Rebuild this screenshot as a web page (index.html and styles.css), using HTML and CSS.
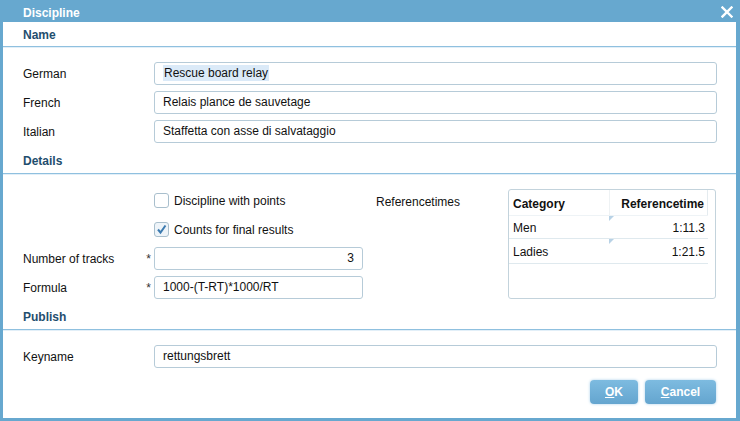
FILE: index.html
```html
<!DOCTYPE html>
<html>
<head>
<meta charset="utf-8">
<link rel="stylesheet" href="styles.css">
</head>
<body>
<div class="dialog">
  <div class="titlebar">
    <span class="title">Discipline</span>
    <svg class="close" width="12" height="12" viewBox="0 0 12 12"><path d="M1.5 1.5 L10.5 10.5 M10.5 1.5 L1.5 10.5" stroke="#fff" stroke-width="2.4" stroke-linecap="square"/></svg>
  </div>
  <div class="content">
    <div class="section-head first">Name</div>
    <div class="section-body">
      <div class="row"><label class="lbl">German</label><div class="input"><span class="sel">Rescue board relay</span></div></div>
      <div class="row"><label class="lbl">French</label><div class="input">Relais plance de sauvetage</div></div>
      <div class="row"><label class="lbl">Italian</label><div class="input">Staffetta con asse di salvataggio</div></div>
    </div>
    <div class="section-head">Details</div>
    <div class="section-body details">
      <div class="left">
        <div class="row"><label class="lbl"></label><div class="check"><span class="box"></span>Discipline with points</div></div>
        <div class="row"><label class="lbl"></label><div class="check"><span class="box on"><svg width="13" height="13" viewBox="0 0 13 13"><path d="M3 6.5 L5.5 9.5 L10.5 2.5" fill="none" stroke="#3d7bb0" stroke-width="2"/></svg></span>Counts for final results</div></div>
        <div class="row"><label class="lbl req">Number of tracks<span class="ast">*</span></label><div class="input small num">3</div></div>
        <div class="row"><label class="lbl req">Formula<span class="ast">*</span></label><div class="input small">1000-(T-RT)*1000/RT</div></div>
      </div>
      <div class="reflabel">Referencetimes</div>
      <div class="grid">
        <div class="ghead">
          <div class="c1">Category</div>
          <div class="c2">Referencetime</div>
        </div>
        <div class="grow"><div class="c1">Men</div><div class="c2 dirty">1:11.3</div></div>
        <div class="grow"><div class="c1">Ladies</div><div class="c2 dirty">1:21.5</div></div>
      </div>
    </div>
    <div class="section-head">Publish</div>
    <div class="section-body">
      <div class="row"><label class="lbl">Keyname</label><div class="input">rettungsbrett</div></div>
      <div class="buttons">
        <button class="btn ok"><u>O</u>K</button>
        <button class="btn cancel"><u>C</u>ancel</button>
      </div>
    </div>
  </div>
</div>
</body>
</html>
```

FILE: styles.css
```css
* { box-sizing: border-box; }
html, body { margin: 0; padding: 0; }
body {
  width: 740px;
  height: 421px;
  font-family: "Liberation Sans", Arial, sans-serif;
  font-size: 12px;
  color: #111;
  background: #fff;
}
.dialog {
  width: 740px;
  height: 421px;
  border-left: 3px solid #67a8cf;
  border-right: 4px solid #67a8cf;
  border-bottom: 3px solid #67a8cf;
  display: flex;
  flex-direction: column;
}
.titlebar {
  height: 22px;
  margin: 0 -4px 0 -3px;
  background: #67a8cf;
  display: flex;
  align-items: center;
  justify-content: space-between;
  padding: 3px 7px 0 23px;
}
.title {
  color: #fff;
  font-weight: bold;
  font-size: 12px;
}
.close { display: block; margin-top: -2px; }
.content {
  flex: 1;
  display: flex;
  flex-direction: column;
}
.section-head {
  padding: 6px 20px 0 20px;
  line-height: 24px;
  height: 31px;
  font-weight: bold;
  color: #1f4e6e;
  border-bottom: 1px solid #8fc0df;
  box-shadow: 0 1px 0 #e2eff8;
  margin-bottom: 1px;
}
.section-head.first {
  padding-top: 1px;
  height: 25px;
}
.section-body {
  padding: 14px 19px 0 20px;
  display: flex;
  flex-direction: column;
  gap: 6px;
}
.row {
  display: flex;
  align-items: center;
  height: 23px;
}
.lbl {
  width: 131px;
  flex: none;
  display: flex;
  justify-content: space-between;
  padding-right: 3px;
  color: #111;
  padding-top: 1px;
}
.ast { color: #333; }
.input {
  flex: 1;
  height: 23px;
  border: 1px solid #b6cbd8;
  border-radius: 3px;
  padding: 0 8px;
  line-height: 21px;
  color: #111;
  white-space: nowrap;
  overflow: hidden;
}
.input.small {
  flex: none;
  width: 209px;
}
.input.num { text-align: right; }
.sel { background: #dbeaf8; padding: 1px 1px; }
.details {
  flex-direction: row;
  gap: 0;
  align-items: flex-start;
}
.left {
  display: flex;
  flex-direction: column;
  gap: 6px;
}
.check {
  display: flex;
  align-items: center;
  gap: 5px;
}
.box {
  width: 15px;
  height: 15px;
  border: 1px solid #a9bfcd;
  border-radius: 3px;
  background: #fff;
  display: flex;
  align-items: center;
  justify-content: center;
}
.box.on { background: #eef4f9; }
.box svg { display: block; }
.reflabel {
  width: 132px;
  margin-left: 13px;
  padding-top: 6px;
}
.grid {
  flex: 1;
  margin-right: 1px;
  height: 110px;
  border: 1px solid #c3d3dc;
  border-radius: 3px;
  padding-right: 7px;
}
.ghead {
  display: flex;
  height: 26px;
  align-items: center;
  font-weight: bold;
  border-bottom: 1px solid #eef3f6;
}
.ghead .c1, .ghead .c2 { height: 100%; display: flex; align-items: center; padding-top: 2px; }
.ghead .c2 { justify-content: flex-end; border-left: 1px solid #eef2f4; border-right: 1px solid #e4ebef; }
.c1 { width: 100px; padding-left: 4px; }
.c2 { flex: 1; text-align: right; padding-right: 3px; }
.grow {
  display: flex;
  height: 23px;
  align-items: center;
  border-bottom: 1px solid #dfe9ee;
}
.grow + .grow { height: 25px; }
.grow .c1 { padding-top: 1px; }
.grow .c2 { position: relative; height: 100%; display: flex; align-items: center; justify-content: flex-end; padding-top: 1px; }
.dirty::before {
  content: "";
  position: absolute;
  left: 0;
  top: 0;
  border-top: 5px solid #b8d2e6;
  border-right: 5px solid transparent;
}
.buttons {
  display: flex;
  justify-content: flex-end;
  gap: 7px;
  margin-top: 6px;
  padding-right: 1px;
}
.btn {
  height: 24px;
  border: none;
  border-radius: 4px;
  background: linear-gradient(#7dbbe0, #64a5cf);
  color: #fff;
  font-family: "Liberation Sans", Arial, sans-serif;
  font-weight: bold;
  font-size: 12px;
  box-shadow: 0 0 3px #a9d0ea;
  padding: 0;
}
.btn.ok { width: 48px; }
.btn.cancel { width: 71px; }
```
